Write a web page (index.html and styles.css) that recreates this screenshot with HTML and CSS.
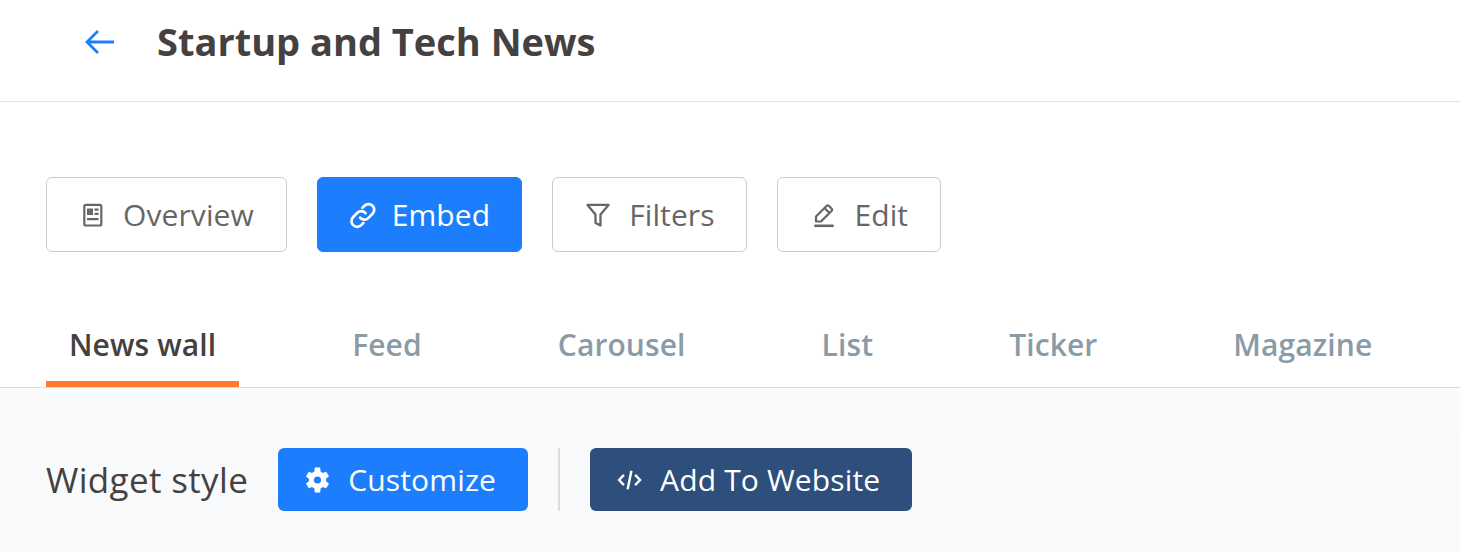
FILE: index.html
```html
<!DOCTYPE html>
<html lang="en">
<head>
    <meta charset="UTF-8">
    <title>Startup and Tech News</title>
    <link rel="stylesheet" href="styles.css">
</head>
<body>
    <header class="header">
        <a class="back" href="#">
            <svg width="32" height="26" viewBox="0 0 32 26" fill="none" stroke="#1c7efc" stroke-width="2.800"><path d="M30 13H3M14 2 3 13l11 11"/></svg>
        </a>
        <h1>Startup and Tech News</h1>
    </header>

    <nav class="actions">
        <a class="action" href="#">
            <svg width="28" height="28" viewBox="0 0 28 28"><rect x="5.300" y="3.800" width="17" height="20.700" rx="1.500" fill="none" stroke="#666" stroke-width="2.200"/><path d="M8 7.500h6v6.500H8zM15.500 7.500h4v2.300h-4zM15.500 11.700h4V14h-4zM8 17h11.500v2.300H8z" fill="#666"/></svg>
            Overview
        </a>
        <a class="action active" href="#">
            <svg width="28" height="28" viewBox="0 0 28 28" fill="none" stroke="#fff" stroke-width="2.500" stroke-linecap="round"><g transform="translate(-1.200 .4) scale(1.08)"><path d="M10.500 15a5 5 0 0 0 7.500.5l4-4a5.300 5.300 0 0 0-7.500-7.500l-2 2"/><path d="M15.500 11a5 5 0 0 0-7.500-.5l-4 4a5.300 5.300 0 0 0 7.500 7.500l2-2"/></g></svg>
            Embed
        </a>
        <a class="action" href="#">
            <svg width="28" height="28" viewBox="0 0 28 28" fill="none" stroke="#666" stroke-width="2.300" stroke-linejoin="round"><path d="M2.500 3.900h21l-8 9.600v10.900l-5-2.400v-8.500z"/></svg>
            Filters
        </a>
        <a class="action" href="#">
            <svg width="28" height="28" viewBox="0 0 28 28" fill="none" stroke="#666" stroke-width="2.200" stroke-linejoin="round"><path d="M6 20.500v-5L16.500 5a1.800 1.800 0 0 1 2.500 0l2.500 2.500a1.800 1.800 0 0 1 0 2.500L11 20.500zM14.500 7l5 5"/><path d="M4.300 24.800h19.400" stroke-width="2.600"/></svg>
            Edit
        </a>
    </nav>

    <ul class="tabs">
        <li class="tab selected">News wall</li>
        <li class="tab">Feed</li>
        <li class="tab">Carousel</li>
        <li class="tab">List</li>
        <li class="tab">Ticker</li>
        <li class="tab">Magazine</li>
    </ul>

    <section class="toolbar">
        <span class="toolbar-label">Widget style</span>
        <a class="tool-btn blue" href="#">
            <svg width="28" height="28" viewBox="-1 -1 26 26" fill="#fff"><path fill-rule="evenodd" d="M19.400 13.200a7.600 7.600 0 0 0 0-2.400l2.800-2.100-2.600-4.400-3.100 1.300a8 8 0 0 0-2-1.200L14 .3H9l-.5 4.100a8 8 0 0 0-2 1.200L3.400 4.300.8 8.700l2.800 2.100a7.600 7.600 0 0 0 0 2.400L.8 15.300l2.600 4.400 3.100-1.300a8 8 0 0 0 2 1.200l.5 4.100h5l.5-4.100a8 8 0 0 0 2-1.200l3.100 1.300 2.600-4.400zM11.500 15.300a3.300 3.300 0 1 1 0-6.600 3.300 3.300 0 0 1 0 6.600z"/></svg>
            Customize
        </a>
        <span class="divider"></span>
        <a class="tool-btn navy" href="#">
            <svg width="28" height="28" viewBox="-1.500 -4 30 30" fill="none" stroke="#fff" stroke-width="2.600"><path d="M7 5.500 1.800 11 7 16.500M19 5.500l5.200 5.500-5.200 5.500M15 1l-4 20"/></svg>
            Add To Website
        </a>
    </section>
</body>
</html>
```

FILE: styles.css
```css
* {
    box-sizing: border-box;
}

html, body {
    height: 100%;
}

body {
    margin: 0;
    font-family: "Open Sans", sans-serif;
    color: #444140;
    background-color: #ffffff;
    display: flex;
    flex-direction: column;
    overflow: hidden;
}

a {
    text-decoration: none;
}

.header {
    display: flex;
    align-items: center;
    height: 102px;
    padding: 0 0 19px 84px;
    border-bottom: 1px solid #e0e0e0;
}

.back {
    display: flex;
    margin: 2px 41px 0 0;
}

.header h1 {
    margin: 0;
    font-size: 38px;
    font-weight: 700;
    line-height: 48px;
}

.actions {
    display: flex;
    gap: 30px;
    padding: 75px 0 0 46px;
}

.action {
    display: flex;
    align-items: center;
    gap: 16px;
    height: 75px;
    padding: 0 31.8px 0 32px;
    border: 1px solid #cccccc;
    border-radius: 6px;
    font-size: 30px;
    letter-spacing: 0.1px;
    color: #666666;
}

.action.active {
    padding-right: 31px;
    background-color: #1c7efc;
    border-color: #1c7efc;
    color: #ffffff;
}

.action.active svg {
    margin-right: -2px;
}

.tabs {
    display: flex;
    gap: 90px;
    list-style: none;
    margin: 0;
    padding: 56px 0 0 46px;
    border-bottom: 1px solid #dddddd;
}

.tab {
    height: 79px;
    padding: 13px 23px 0;
    font-size: 30px;
    font-weight: 600;
    letter-spacing: 0.1px;
    line-height: 48px;
    color: #8a9ba8;
}

.tab.selected {
    color: #444140;
    border-bottom: 6px solid #ff7a30;
}

.toolbar {
    flex: 1;
    display: flex;
    align-items: flex-start;
    padding: 60px 0 0 46px;
    background: linear-gradient(#fafbfd, #f8f9fb);
}

.toolbar-label {
    margin-right: 30px;
    font-size: 35px;
    font-weight: 500;
    letter-spacing: 0.35px;
    line-height: 63px;
}

.tool-btn {
    display: flex;
    align-items: center;
    gap: 16px;
    height: 63px;
    padding: 0 32px 0 26px;
    border-radius: 6px;
    font-size: 30px;
    letter-spacing: 0.15px;
    color: #ffffff;
}

.tool-btn.blue {
    background-color: #1c7efc;
}

.tool-btn.navy {
    background-color: #2e4f7c;
}

.divider {
    width: 2px;
    height: 63px;
    margin: 0 30px;
    background-color: #dddddd;
}
```
